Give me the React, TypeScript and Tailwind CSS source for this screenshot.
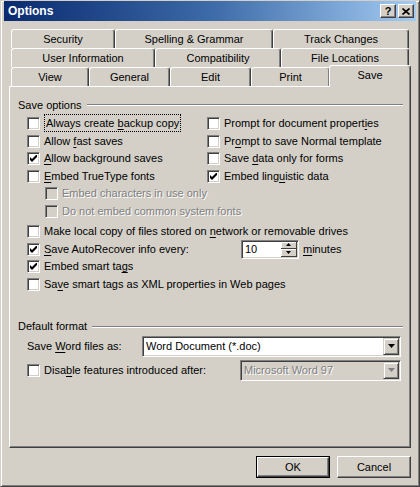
import React from "react";

const ui = "font-['Tahoma','Liberation_Sans',sans-serif] text-[11px] leading-none text-black";

function Box({ checked, disabled }: { checked?: boolean; disabled?: boolean }) {
  return (
    <span
      className={`relative inline-block w-[13px] h-[13px] shrink-0 border border-t-[#808080] border-l-[#808080] border-b-white border-r-white shadow-[inset_1px_1px_0_#404040,inset_-1px_-1px_0_#d4d0c8] ${
        disabled ? "bg-[#d4d0c8]" : "bg-white"
      }`}
    >
      {checked && (
        <svg className="absolute left-[2px] top-[2px]" width="7" height="7" viewBox="0 0 7 7">
          <polygon points="0,2 2,4 7,-1 7,2 2,7 0,5" fill="#000" />
        </svg>
      )}
    </span>
  );
}

function Check({
  children,
  checked,
  disabled,
  className = "",
}: {
  children: React.ReactNode;
  checked?: boolean;
  disabled?: boolean;
  className?: string;
}) {
  return (
    <div className={`flex items-center h-[17.5px] gap-[4px] ${className}`}>
      <Box checked={checked} disabled={disabled} />
      <span className={disabled ? "text-[#808080] [text-shadow:1px_1px_0_#fff]" : ""}>{children}</span>
    </div>
  );
}

function U({ children }: { children: React.ReactNode }) {
  return <span className="underline underline-offset-[2px]">{children}</span>;
}

function Tab({ label, className = "" }: { label: string; className?: string }) {
  return (
    <div
      className={`flex items-center justify-center h-[19px] bg-[#d4d0c8] border-t border-l border-white border-r border-r-[#404040] rounded-t-[3px] shadow-[inset_-1px_0_0_#808080] ${className}`}
    >
      {label}
    </div>
  );
}

function Legend({ label }: { label: string }) {
  return (
    <div className="flex items-center h-[14px] pl-[8px] pr-[7px] gap-[5px]">
      <span>{label}</span>
      <div className="flex-1 h-[2px] border-t border-t-[#808080] border-b border-b-white" />
    </div>
  );
}

function DropBtn({ disabled }: { disabled?: boolean }) {
  return (
    <div className="w-[16px] h-[17px] bg-[#d4d0c8] border border-t-[#d4d0c8] border-l-[#d4d0c8] border-b-[#404040] border-r-[#404040] shadow-[inset_1px_1px_0_#fff,inset_-1px_-1px_0_#808080] flex items-center justify-center">
      <svg width="7" height="4" viewBox="0 0 7 4">
        <polygon points="0,0 7,0 3.5,4" fill={disabled ? "#808080" : "#000"} />
      </svg>
    </div>
  );
}

function Combo({ value, disabled, className = "" }: { value: string; disabled?: boolean; className?: string }) {
  return (
    <div
      className={`h-[21px] flex items-center border border-t-[#808080] border-l-[#808080] border-b-white border-r-white shadow-[inset_1px_1px_0_#404040,inset_-1px_-1px_0_#d4d0c8] p-[1px] ${
        disabled ? "bg-[#d4d0c8]" : "bg-white"
      } ${className}`}
    >
      <span className={`flex-1 pl-[2px] ${disabled ? "text-[#808080] [text-shadow:1px_1px_0_#fff]" : ""}`}>{value}</span>
      <DropBtn disabled={disabled} />
    </div>
  );
}

function Spinner() {
  return (
    <div className="w-[58px] h-[19px] flex items-center bg-white border border-t-[#808080] border-l-[#808080] border-b-white border-r-white shadow-[inset_1px_1px_0_#404040,inset_-1px_-1px_0_#d4d0c8] p-[1px]">
      <span className="flex-1 pl-[2px]">10</span>
      <div className="flex flex-col w-[16px] h-full">
        {[0, 1].map((i) => (
          <div
            key={i}
            className="flex-1 flex items-center justify-center bg-[#d4d0c8] border-b border-r border-b-[#404040] border-r-[#404040] shadow-[inset_1px_1px_0_#fff]"
          >
            <svg width="5" height="3" viewBox="0 0 5 3">
              <polygon points={i === 0 ? "0,3 5,3 2.5,0" : "0,0 5,0 2.5,3"} fill="#000" />
            </svg>
          </div>
        ))}
      </div>
    </div>
  );
}

function Button({ label, primary }: { label: string; primary?: boolean }) {
  return (
    <div className={`w-[74px] h-[22px] ${primary ? "border border-black" : ""}`}>
      <div className="w-full h-full flex items-center justify-center bg-[#d4d0c8] border border-t-white border-l-white border-b-[#404040] border-r-[#404040] shadow-[inset_-1px_-1px_0_#808080]">
        {label}
      </div>
    </div>
  );
}

export default function App() {
  return (
    <div className={`w-[420px] h-[487px] bg-[#d4d0c8] overflow-hidden ${ui}`}>
      <div className="w-full h-full flex flex-col border-l border-t border-l-[#d4d0c8] border-t-[#d4d0c8] border-r border-b border-r-[#404040] border-b-[#404040] shadow-[inset_1px_1px_0_#fff,inset_-1px_-1px_0_#808080] px-[2px]">
        {/* title bar */}
        <div className="h-[20px] mx-[1px] flex items-center pl-[4px] pr-[2px] bg-gradient-to-r from-[#0a2a70] via-[#3d6aa8] to-[#a4ccf2]">
          <span className="flex-1 text-white font-bold text-[12px]">Options</span>
          <div className="flex gap-[2px]">
            <div className="w-[16px] h-[14px] flex items-center justify-center bg-[#d4d0c8] border border-t-white border-l-white border-b-[#404040] border-r-[#404040] shadow-[inset_-1px_-1px_0_#808080] font-bold text-[11px]">
              ?
            </div>
            <div className="w-[16px] h-[14px] flex items-center justify-center bg-[#d4d0c8] border border-t-white border-l-white border-b-[#404040] border-r-[#404040] shadow-[inset_-1px_-1px_0_#808080]">
              <svg width="8" height="7" viewBox="0 0 8 7">
                <path d="M0.5 0.5 L7.5 6.5 M7.5 0.5 L0.5 6.5" stroke="#000" strokeWidth="1.6" />
              </svg>
            </div>
          </div>
        </div>

        {/* tabs */}
        <div className="mt-[8px] pl-[8px]">
          <div className="flex">
            <Tab label="Security" className="w-[104px]" />
            <Tab label="Spelling & Grammar" className="w-[158px]" />
            <Tab label="Track Changes" className="w-[136px]" />
          </div>
          <div className="flex">
            <Tab label="User Information" className="w-[144px]" />
            <Tab label="Compatibility" className="w-[126px]" />
            <Tab label="File Locations" className="w-[128px]" />
          </div>
          <div className="flex items-end h-[19px]">
            <Tab label="View" className="w-[78px]" />
            <Tab label="General" className="w-[81px]" />
            <Tab label="Edit" className="w-[81px]" />
            <Tab label="Print" className="w-[79px]" />
            <Tab label="Save" className="relative z-10 w-[82px] ml-[-1px] !h-[22px] mb-[-1px] pb-[3px]" />
          </div>
        </div>

        {/* panel */}
        <div className="ml-[6px] w-[402px] h-[362px] flex flex-col border border-t-white border-l-white border-b-[#404040] border-r-[#404040] shadow-[inset_-1px_-1px_0_#808080]">
          <div className="mt-[11px]">
            <Legend label="Save options" />
          </div>
          <div className="mt-[3px] pl-[17px] grid grid-cols-[180px_1fr]">
            <div className="flex flex-col">
              <Check>
                <span className="border border-dotted border-black px-[1px] py-[2px]">
                  Always create <U>b</U>ackup copy
                </span>
              </Check>
              <Check>
                Allow <U>f</U>ast saves
              </Check>
              <Check checked>
                <U>A</U>llow background saves
              </Check>
              <Check>
                <U>E</U>mbed TrueType fonts
              </Check>
            </div>
            <div className="flex flex-col">
              <Check>
                Prompt for document propert<U>i</U>es
              </Check>
              <Check>
                Pr<U>o</U>mpt to save Normal template
              </Check>
              <Check>
                Save <U>d</U>ata only for forms
              </Check>
              <Check checked>
                Embed ling<U>u</U>istic data
              </Check>
            </div>
          </div>
          <div className="pl-[35px] flex flex-col">
            <Check disabled>Embed characters in use only</Check>
            <Check disabled>Do not embed common system fonts</Check>
          </div>
          <div className="mt-[2.75px] pl-[17px] flex flex-col">
            <Check>
              Make local copy of files stored on <U>n</U>etwork or removable drives
            </Check>
            <div className="flex items-center h-[17.5px]">
              <div className="w-[214px]">
                <Check checked>
                  <U>S</U>ave AutoRecover info every:
                </Check>
              </div>
              <Spinner />
              <span className="ml-[4px]">
                <U>m</U>inutes
              </span>
            </div>
            <Check checked>
              Embed smart ta<U>g</U>s
            </Check>
            <Check>
              Sa<U>v</U>e smart tags as XML properties in Web pages
            </Check>
          </div>

          <div className="mt-[27px]">
            <Legend label="Default format" />
          </div>
          <div className="mt-[2px] pl-[17px] flex items-center">
            <span className="w-[115px]">
              Save <U>W</U>ord files as:
            </span>
            <Combo value="Word Document (*.doc)" className="w-[259px]" />
          </div>
          <div className="mt-[3px] pl-[17px] flex items-center">
            <div className="w-[213px]">
              <Check>
                Disa<U>b</U>le features introduced after:
              </Check>
            </div>
            <Combo value="Microsoft Word 97" disabled className="w-[161px]" />
          </div>
        </div>

        {/* buttons */}
        <div className="mt-[8px] flex justify-end gap-[7px] pr-[6px]">
          <Button label="OK" primary />
          <Button label="Cancel" />
        </div>
      </div>
    </div>
  );
}
